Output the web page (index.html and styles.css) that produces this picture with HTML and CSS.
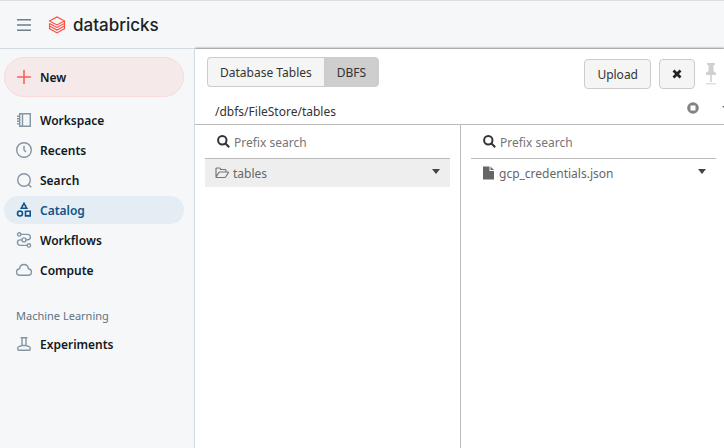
FILE: index.html
```html
<!DOCTYPE html>
<html lang="en">
<head>
<meta charset="utf-8">
<title>Databricks - DBFS</title>
<link rel="stylesheet" href="styles.css">
</head>
<body>
<header class="topbar">
  <button class="menu" aria-label="Menu">
    <svg width="16" height="16" viewBox="0 0 16 16"><path d="M1 2.750h14M1 8h14M1 13.250h14" stroke="#6b7f8e" stroke-width="1.5"/></svg>
  </button>
  <a class="brand" href="#">
    <svg width="18" height="18" viewBox="0 0 18 18" fill="none" stroke="#ff4a3d" stroke-width="1.1"><path d="M15.500 4.600L9 1 1.500 5 9 9l7.500-4v2.500L9 11.500 1.500 7.500M1.500 7.200v2.700L9 14l7.500-4.100V7.500M1.500 9.900v2.700L9 16.900l7.500-4.300V9.900"/></svg>
    <span>databricks</span>
  </a>
</header>
<div class="shell">
  <nav class="sidebar">
    <button class="new">
      <svg width="16" height="16" viewBox="0 0 16 16"><path d="M8 1v14M1 8h14" stroke="#ff5f5b" stroke-width="1.6"/></svg>
      New
    </button>
    <a class="item" href="#">
      <svg class="icon" viewBox="0 0 16 16"><path d="M3.700 1.700h10.600v12.600H3.700zM6.500 1.700v12.600M1 4.200h2.700M1 6.800h2.700M1 9.300h2.700M1 11.900h2.700"/></svg>
      Workspace
    </a>
    <a class="item" href="#">
      <svg class="icon" viewBox="0 0 16 16"><circle cx="8" cy="8" r="7.300"/><path d="M8 3.800V8l2 2"/></svg>
      Recents
    </a>
    <a class="item" href="#">
      <svg class="icon" viewBox="0 0 16 16"><circle cx="8" cy="8" r="6.300"/><path d="M12.500 12.500L15.300 15.300"/></svg>
      Search
    </a>
    <a class="item active" href="#" aria-current="page">
      <svg class="icon" viewBox="0 0 16 16"><path d="M8 1.300l2.700 4.900H5.300z"/><circle cx="4" cy="11.500" r="2.500"/><path d="M9.500 9.200h4.700v4.700H9.500z"/></svg>
      Catalog
    </a>
    <a class="item" href="#">
      <svg class="icon" viewBox="0 0 16 16"><circle cx="3.200" cy="2.400" r="1.700"/><circle cx="12.900" cy="13.400" r="1.700"/><circle cx="8" cy="7.900" r="2"/><path d="M4.900 2.400h6.800a2.700 2.700 0 0 1 0 5.400H10M6 7.900H4.200a2.700 2.700 0 0 0 0 5.500h7"/></svg>
      Workflows
    </a>
    <a class="item" href="#">
      <svg class="icon" viewBox="0 0 16 16"><path d="M4 13.300a3.300 3.300 0 0 1-.4-6.600C3.900 4 5.800 2.500 8 2.500S12.100 4 12.400 6.700a3.300 3.300 0 0 1-.4 6.600z"/></svg>
      Compute
    </a>
    <h2 class="section">Machine Learning</h2>
    <a class="item" href="#">
      <svg class="icon" viewBox="0 0 16 16"><path d="M4.600 1.700h6.800M6 1.700v7.800l-3.600 1.300c-.9.400-1 3.500.3 3.500h10.600c1.300 0 1.200-3.100.3-3.500L10 9.500V1.700M6 9.500h4"/></svg>
      Experiments
    </a>
  </nav>
  <main class="main">
    <div class="toolbar">
      <div class="tabs">
        <button class="tab">Database Tables</button><button class="tab selected">DBFS</button>
      </div>
      <div class="actions">
        <button class="btn">Upload</button>
        <button class="btn close" aria-label="Close">
          <svg width="10" height="10" viewBox="0 0 10 10"><path d="M1.500 1.500l7 7M8.500 1.500l-7 7" stroke="#222" stroke-width="2.800"/></svg>
        </button>
        <svg class="pin" width="10" height="22" viewBox="0 0 10 22"><path fill="#d0d0d0" d="M1 0h8v2H7.500v6L10 10v2H5.800v7H4.200v-7H0v-2l2.500-2V2H1z"/><path fill="#e0e0e0" d="M0 20h10v1.500H0z"/></svg>
      </div>
    </div>
    <div class="pathbar">
      <span>/dbfs/FileStore/tables</span>
      <svg class="stop" width="12" height="12" viewBox="0 0 12 12"><circle cx="6" cy="6" r="5.800" fill="#828282"/><path d="M3.500 3.500h5v5h-5z" fill="#fff"/></svg>
      <svg class="more" width="8" height="5" viewBox="0 0 8 5"><path d="M0 1h8L4 5z" fill="#666"/></svg>
    </div>
    <div class="columns">
      <section class="column">
        <label class="search">
          <svg width="13" height="13" viewBox="0 0 13 13" fill="none" stroke="#333" stroke-width="2"><circle cx="5.300" cy="5.300" r="4.200"/><path d="M8.500 8.500l3.700 3.700"/></svg>
          <input type="text" placeholder="Prefix search" aria-label="Prefix search">
        </label>
        <div class="row current">
          <svg width="14" height="12" viewBox="0 0 14 12" fill="none" stroke="#777" stroke-width="1.2" stroke-linejoin="round"><path d="M1 10V2q0-1 1-1h2.500q1 0 1 1v.5H10q1 0 1 1V5M1 10l2.500-4q.7-1 1.500-1h8q.8 0 .3.800L11 9.500q-.7 1-1.500 1H1.500q-.5 0-.5-.5z"/></svg>
          <a href="#">tables</a>
          <button class="caret" aria-label="Options for tables"><svg width="8" height="5" viewBox="0 0 8 5"><path d="M0 0h8L4 5z" fill="#444"/></svg></button>
        </div>
      </section>
      <section class="column">
        <label class="search">
          <svg width="13" height="13" viewBox="0 0 13 13" fill="none" stroke="#333" stroke-width="2"><circle cx="5.300" cy="5.300" r="4.200"/><path d="M8.500 8.500l3.700 3.700"/></svg>
          <input type="text" placeholder="Prefix search" aria-label="Prefix search">
        </label>
        <div class="row file">
          <svg width="12" height="14" viewBox="0 0 12 14"><path fill="#666" d="M0 .5h6.500V5H11v8.500H0zM7.500.5L11 4H7.500z"/></svg>
          <a href="#">gcp_credentials.json</a>
          <button class="caret" aria-label="Options for gcp_credentials.json"><svg width="8" height="5" viewBox="0 0 8 5"><path d="M0 0h8L4 5z" fill="#444"/></svg></button>
        </div>
      </section>
    </div>
  </main>
</div>
</body>
</html>
```
FILE: styles.css
```css
* { box-sizing: border-box; }
body {
  margin: 0;
  min-height: 100vh;
  display: flex;
  flex-direction: column;
  overflow: hidden;
  background: #f5f7f9;
  color: #11171c;
  font: 12px/21px "Noto Sans", "Open Sans", sans-serif;
}
button, input { font: inherit; color: inherit; }
button { cursor: pointer; }
a { color: inherit; text-decoration: none; }
svg { display: block; flex: none; }

.topbar {
  display: flex;
  align-items: center;
  gap: 16px;
  height: 49px;
  padding: 0 16px;
  border-top: 1px solid #dcdedb;
  border-bottom: 1px solid #d1d9e1;
}
.menu { padding: 0; border: 0; background: none; }
.brand {
  display: flex;
  align-items: center;
  gap: 7px;
  color: #1b1f24;
  font: 500 17px/24px Inter, sans-serif;
}

.shell { display: flex; flex: 1; }
.sidebar {
  display: flex;
  flex-direction: column;
  gap: 2px;
  flex: none;
  width: 195px;
  padding: 8px 10px 8px 4px;
  border-right: 1px solid #d1d9e1;
}
.new, .item {
  display: flex;
  align-items: center;
  gap: 8px;
  padding: 0 12px;
  font-weight: 600;
}
.new {
  height: 40px;
  margin-bottom: 7px;
  padding: 0 11px;
  border: 1px solid #f8dadb;
  border-radius: 20px;
  background: #f6e9e9;
}
.item { height: 28px; border-radius: 14px; }
.icon {
  width: 16px;
  height: 16px;
  fill: none;
  stroke: #8396a5;
  stroke-width: 1.4;
}
.active { background: #e5edf4; color: #0e538b; }
.active .icon { stroke: #0e538b; stroke-width: 1.6; }
.section {
  margin: 20px 0 2px;
  padding: 0 12px;
  color: #5f7281;
  font-size: 11px;
  font-weight: 400;
  line-height: 20px;
}

.main {
  flex: 1;
  min-width: 0;
  display: flex;
  flex-direction: column;
  overflow: hidden;
  background: #fff;
  box-shadow: 0 -1px 2px #999;
  clip-path: inset(-4px 0 0 0);
  color: #333;
}
.toolbar {
  display: flex;
  justify-content: space-between;
  align-items: flex-start;
  padding: 8px 8px 0 12px;
}
.tabs { display: flex; }
.tab, .btn {
  height: 30px;
  padding: 1px 12px 0;
  border: 1px solid #ccc;
  border-radius: 4px;
  background: #f5f5f5;
}
.tab:first-child { border-right: 0; border-radius: 4px 0 0 4px; }
.tab:last-child { border-radius: 0 4px 4px 0; }
.selected { background: #cecece; }
.actions { display: flex; align-items: center; gap: 8px; padding-top: 2px; }
.close { width: 36px; display: grid; place-items: center; padding: 0; }
.pin { margin-left: 3px; }

.pathbar {
  display: flex;
  align-items: center;
  height: 36px;
  margin-right: -6px;
  padding-left: 20px;
  border-bottom: 1px solid #bbb;
}
.pathbar span { padding-top: 10px; }
.stop, .more { margin-top: 2px; }
.stop { margin-left: auto; }
.more { margin-left: 23px; }

.columns { display: flex; flex: 1; }
.column {
  flex: none;
  width: 266px;
  padding: 0 10px;
  border-right: 1px solid #bbb;
}
.search {
  display: flex;
  align-items: center;
  gap: 4px;
  height: 34px;
  padding-left: 12px;
  border-bottom: 1px solid #bbb;
}
.search input {
  flex: 1;
  min-width: 0;
  padding: 2px 0 0;
  border: 0;
  outline: 0;
  background: none;
}
.search input::placeholder { color: #757575; opacity: 1; }
.row {
  display: flex;
  align-items: center;
  gap: 4px;
  height: 28px;
  padding: 0 10px;
  color: #666;
}
.row.file { padding-left: 12px; }
.current { background: #eee; }
.caret { height: 8px; margin: 0 0 4px auto; padding: 0; border: 0; background: none; }
```
